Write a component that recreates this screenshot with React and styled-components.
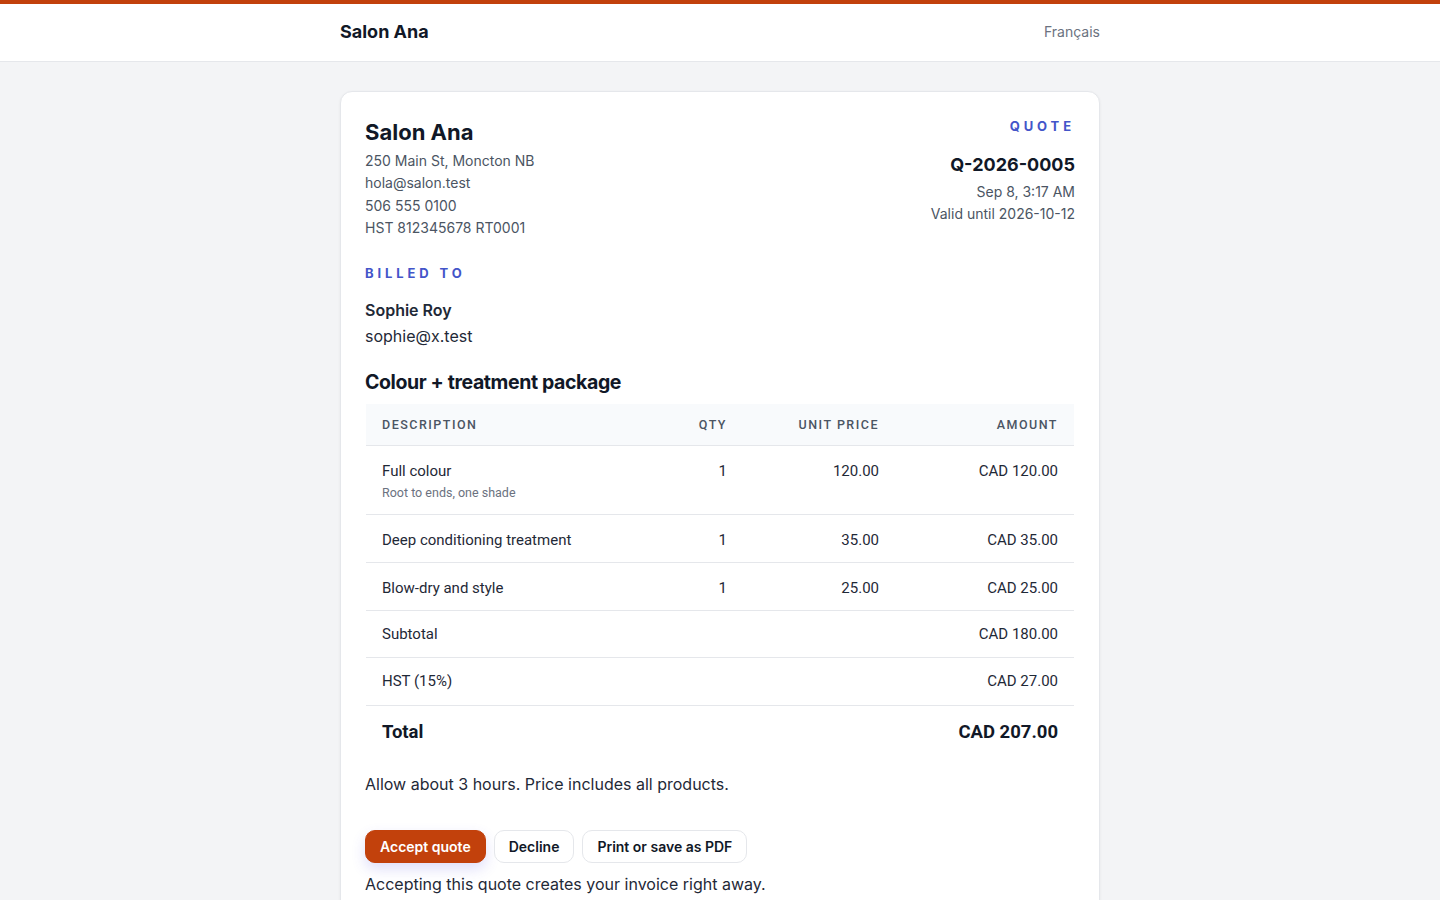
import React from 'react';
import styled, { createGlobalStyle } from 'styled-components';

const GlobalStyle = createGlobalStyle`
  * { box-sizing: border-box; }
  body {
    margin: 0;
    background: #f3f4f6;
    font-family: Inter, "Noto Sans", sans-serif;
    color: #111827;
  }
`;

const items = [
  { name: 'Full colour', note: 'Root to ends, one shade', qty: 1, unit: '120.00', amount: 'CAD 120.00' },
  { name: 'Deep conditioning treatment', qty: 1, unit: '35.00', amount: 'CAD 35.00' },
  { name: 'Blow-dry and style', qty: 1, unit: '25.00', amount: 'CAD 25.00' },
];

function App() {
  return (
    <>
      <GlobalStyle />
      <TopBar>
        <TopInner>
          <Brand>Salon Ana</Brand>
          <LangLink>Français</LangLink>
        </TopInner>
      </TopBar>
      <Page>
        <Card>
          <Head>
            <div>
              <BizName>Salon Ana</BizName>
              <InfoLine>250 Main St, Moncton NB</InfoLine>
              <InfoLine>hola@salon.test</InfoLine>
              <InfoLine>506 555 0100</InfoLine>
              <InfoLine>HST 812345678 RT0001</InfoLine>
            </div>
            <DocMeta>
              <Eyebrow>Quote</Eyebrow>
              <DocNumber>Q-2026-0005</DocNumber>
              <MetaLine>Sep 8, 3:17 AM</MetaLine>
              <MetaLine>Valid until 2026-10-12</MetaLine>
            </DocMeta>
          </Head>

          <Billed>
            <Eyebrow>Billed to</Eyebrow>
            <ClientName>Sophie Roy</ClientName>
            <ClientEmail>sophie@x.test</ClientEmail>
          </Billed>

          <Title>Colour + treatment package</Title>

          <Table>
            <HeadRow>
              <Th>Description</Th>
              <Th $right>Qty</Th>
              <Th $right>Unit price</Th>
              <Th $right>Amount</Th>
            </HeadRow>
            {items.map((it) => (
              <Row key={it.name} $tall={!!it.note}>
                <Td>
                  {it.name}
                  {it.note && <Note>{it.note}</Note>}
                </Td>
                <Td $right>{it.qty}</Td>
                <Td $right>{it.unit}</Td>
                <Td $right>{it.amount}</Td>
              </Row>
            ))}
            <SumRow>
              <Td>Subtotal</Td>
              <Td $right>CAD 180.00</Td>
            </SumRow>
            <SumRow>
              <Td>HST (15%)</Td>
              <Td $right>CAD 27.00</Td>
            </SumRow>
            <SumRow $total>
              <Td>Total</Td>
              <Td $right>CAD 207.00</Td>
            </SumRow>
          </Table>

          <Remark>Allow about 3 hours. Price includes all products.</Remark>

          <Actions>
            <Button $primary>Accept quote</Button>
            <Button>Decline</Button>
            <Button>Print or save as PDF</Button>
          </Actions>
          <Hint>Accepting this quote creates your invoice right away.</Hint>
        </Card>
      </Page>
    </>
  );
}

export default App;

const TopBar = styled.header`
  background: #fff;
  border-top: 4px solid #c2410c;
  border-bottom: 1px solid #e5e7eb;
  height: 62px;
`;

const TopInner = styled.div`
  width: 760px;
  margin: 0 auto;
  height: 55px;
  display: flex;
  align-items: center;
  justify-content: space-between;
`;

const Brand = styled.div`
  font-size: 18px;
  font-weight: 700;
  color: #111827;
`;

const LangLink = styled.a`
  font-size: 14px;
  color: #6b7280;
  cursor: pointer;
`;

const Page = styled.main`
  width: 760px;
  margin: 29px auto 0;
`;

const Card = styled.section`
  background: #fff;
  border: 1px solid #e5e7eb;
  border-radius: 12px;
  box-shadow: 0 1px 3px rgba(15, 23, 42, 0.06);
  padding: 24px 24px 40px;
`;

const Head = styled.div`
  display: flex;
  justify-content: space-between;
  align-items: flex-start;
`;

const BizName = styled.h1`
  margin: 1px 0 3px;
  font-size: 22px;
  font-weight: 700;
  line-height: 30px;
  color: #111827;
`;

const InfoLine = styled.div`
  font-size: 14px;
  line-height: 22.4px;
  color: #4b5563;
`;

const DocMeta = styled.div`
  text-align: right;
`;

const Eyebrow = styled.div`
  font-size: 13px;
  font-weight: 700;
  letter-spacing: 0.3em;
  text-transform: uppercase;
  color: #4355c9;
  line-height: 20px;
`;

const DocNumber = styled.div`
  margin: 16px 0 3px;
  font-size: 18px;
  font-weight: 700;
  line-height: 26px;
  color: #111827;
`;

const MetaLine = styled.div`
  font-size: 14px;
  line-height: 22px;
  color: #4b5563;
`;

const Billed = styled.div`
  margin-top: 23px;
`;

const ClientName = styled.div`
  margin-top: 14px;
  font-size: 16px;
  font-weight: 600;
  line-height: 26px;
  color: #1f2937;
`;

const ClientEmail = styled.div`
  font-size: 16px;
  line-height: 26px;
  color: #1f2937;
`;

const Title = styled.h2`
  margin: 19px 0 8px;
  font-size: 19.5px;
  font-weight: 700;
  line-height: 28px;
  letter-spacing: -0.02em;
  color: #111827;
`;

const Table = styled.div`
  margin: 0 1px;
  font-family: Roboto, "Liberation Sans", sans-serif;
`;

const HeadRow = styled.div`
  display: grid;
  grid-template-columns: 1fr 120px 152px 179px;
  height: 42px;
  align-items: center;
  background: #f8fafc;
  border-bottom: 1px solid #e5e7eb;
`;

const Th = styled.div`
  padding: 0 16px;
  font-size: 12.5px;
  font-weight: 500;
  letter-spacing: 0.12em;
  text-transform: uppercase;
  color: #4b5563;
  text-align: ${(p) => (p.$right ? 'right' : 'left')};
`;

const Row = styled.div`
  display: grid;
  grid-template-columns: 1fr 120px 152px 179px;
  align-items: start;
  padding-top: 16px;
  height: ${(p) => (p.$tall ? '69px' : '48px')};
  border-bottom: 1px solid #e5e7eb;
`;

const Td = styled.div`
  padding: 0 16px;
  font-size: 15px;
  line-height: 18px;
  color: #1f2937;
  text-align: ${(p) => (p.$right ? 'right' : 'left')};
`;

const Note = styled.div`
  margin-top: 4px;
  font-size: 12.5px;
  color: #6b7280;
`;

const SumRow = styled.div`
  display: grid;
  grid-template-columns: 1fr auto;
  align-items: center;
  height: ${(p) => (p.$total ? '52px' : '47.5px')};
  border-bottom: ${(p) => (p.$total ? 'none' : '1px solid #e5e7eb')};

  ${Td} {
    font-size: ${(p) => (p.$total ? '18.5px' : '15px')};
    font-weight: ${(p) => (p.$total ? 700 : 400)};
    color: ${(p) => (p.$total ? '#111827' : '#1f2937')};
  }
`;

const Remark = styled.p`
  margin: 13px 0 0;
  font-size: 16px;
  line-height: 26px;
  color: #1f2937;
`;

const Actions = styled.div`
  display: flex;
  gap: 8px;
  margin-top: 33px;
`;

const Button = styled.button`
  height: 33px;
  padding: 0 14px;
  border-radius: 10px;
  font-family: Inter, "Noto Sans", sans-serif;
  font-size: 14px;
  font-weight: 600;
  cursor: pointer;
  border: 1px solid ${(p) => (p.$primary ? '#c2410c' : '#e5e7eb')};
  background: ${(p) => (p.$primary ? '#c2410c' : '#fff')};
  color: ${(p) => (p.$primary ? '#fff' : '#111827')};
  box-shadow: ${(p) => (p.$primary ? '0 6px 14px rgba(79, 70, 229, 0.18)' : 'none')};
`;

const Hint = styled.p`
  margin: 8px 0 0;
  font-size: 16px;
  line-height: 26px;
  color: #1f2937;
`;
